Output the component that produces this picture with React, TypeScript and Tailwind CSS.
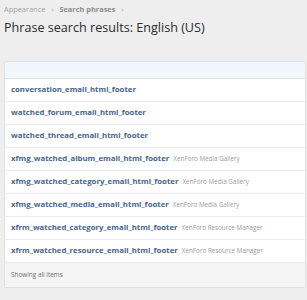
const rows: { name: string; addon?: string }[] = [
  { name: "conversation_email_html_footer" },
  { name: "watched_forum_email_html_footer" },
  { name: "watched_thread_email_html_footer" },
  { name: "xfmg_watched_album_email_html_footer", addon: "XenForo Media Gallery" },
  { name: "xfmg_watched_category_email_html_footer", addon: "XenForo Media Gallery" },
  { name: "xfmg_watched_media_email_html_footer", addon: "XenForo Media Gallery" },
  { name: "xfrm_watched_category_email_html_footer", addon: "XenForo Resource Manager" },
  { name: "xfrm_watched_resource_email_html_footer", addon: "XenForo Resource Manager" },
];

export default function App() {
  return (
    <div className="h-[300px] w-[307px] overflow-hidden bg-[#eeeeee] pl-1 font-['Open_Sans',sans-serif]">
      <div className="flex h-[19px] items-center gap-[6px] pt-[1px] text-[7.4px] text-[#a0a0a0]">
        <span>Appearance</span>
        <span className="text-[7px]">›</span>
        <span className="font-bold text-[#8c8c8c]">Search phrases</span>
        <span className="text-[7px]">›</span>
      </div>
      <h1 className="h-[42px] text-[12.6px] leading-[17px] text-[#2b2b2b]">
        Phrase search results: English (US)
      </h1>
      <div className="w-[302px] rounded-[2px] border border-[#dfe1e3] bg-white">
        <div className="h-[17px] border-b border-[#dde3ea] bg-gradient-to-b from-[#eef5fc] to-[#f4f8fc]" />
        {rows.map((r) => (
          <div
            key={r.name}
            className="flex h-[23px] items-center gap-[4px] border-b border-[#e9ebee] pl-[6px] whitespace-nowrap"
          >
            <span className="text-[7.8px] font-bold text-[#47658c]">{r.name}</span>
            {r.addon && <span className="text-[6.3px] text-[#9a9a9a]">{r.addon}</span>}
          </div>
        ))}
        <div className="flex h-[24px] items-center bg-[#f5f5f5] pl-[6px] text-[6.4px] text-[#6e6e6e]">
          Showing all items
        </div>
      </div>
    </div>
  );
}
